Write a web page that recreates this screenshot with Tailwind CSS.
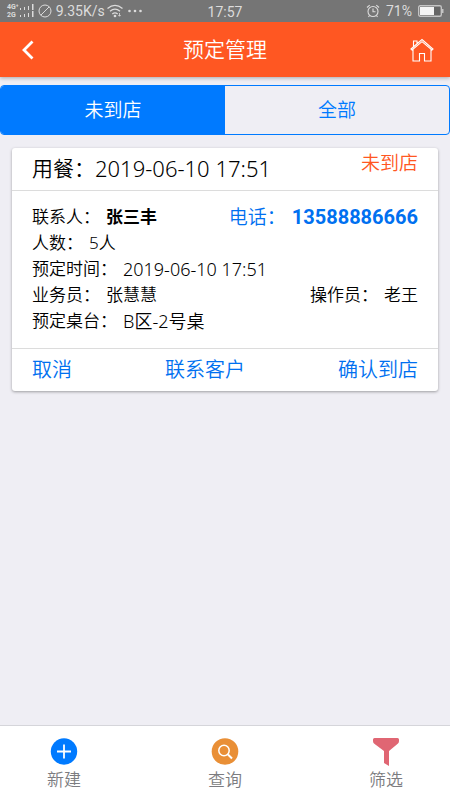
<!DOCTYPE html>
<html lang="zh-CN">
<head>
<meta charset="UTF-8">
<meta name="viewport" content="width=device-width, initial-scale=1">
<title>预定管理</title>
<script src="https://cdn.jsdelivr.net/npm/@tailwindcss/browser@4"></script>
</head>
<body class="flex min-h-screen flex-col bg-[#efeef4] font-['Noto_Sans','Noto_Sans_CJK_SC',sans-serif] text-[17px] leading-[26px] font-[350] text-black">

<!-- Device status bar -->
<div class="relative flex h-[22px] shrink-0 items-center justify-between bg-[#757575] pr-[6px] pl-[7px] font-['Roboto',sans-serif] text-sm leading-5 font-normal text-[#dcdcdc]">
  <div class="flex items-center gap-1">
    <div class="flex items-center gap-px">
      <div class="flex flex-col text-[7px] leading-[8px] font-bold"><span>4G⁺</span><span>2G</span></div>
      <svg class="h-[14px] w-[14px]" viewBox="0 0 14 14" fill="currentColor" aria-hidden="true"><path d="M0 4h1v2H0zM4 3h1v3H4zM8 2h1v4H8zM12 0h1.500v6H12zM0 11h1v2H0zM4 10h1v3H4zM8 9h1v4H8zM12 7h1.500v6H12z"/></svg>
    </div>
    <svg class="h-[14px] w-[14px]" viewBox="0 0 14 14" fill="none" stroke="currentColor" aria-hidden="true"><circle cx="7" cy="7" r="6"/><path d="M2.8 11.2 11.2 2.8"/></svg>
    <div class="flex items-center gap-[2px]">
      <span>9.35K/s</span>
      <svg class="h-[14px] w-4" viewBox="0 0 16 14" fill="none" stroke="currentColor" stroke-width="1.3" aria-hidden="true"><path d="M.5 4.600q7.500-6.500 15 0M3 7.300q5-4.200 10 0M5.300 10q2.700-2.200 5.400 0"/><circle cx="8" cy="12" r=".7" fill="currentColor"/><path d="M12.500 9v3M11.300 11l1.200 1.300 1.200-1.300" stroke-width=".8"/></svg>
    </div>
    <svg class="h-1 w-4" viewBox="0 0 16 4" fill="currentColor" aria-hidden="true"><circle cx="2.500" cy="2" r="1.300"/><circle cx="8" cy="2" r="1.300"/><circle cx="13.500" cy="2" r="1.300"/></svg>
  </div>
  <span class="absolute inset-x-0 top-[2px] text-center">17:57</span>
  <div class="flex items-center gap-[6px]">
    <svg class="h-[14px] w-[14px]" viewBox="0 0 14 14" fill="none" stroke="currentColor" stroke-width="1.1" aria-hidden="true"><circle cx="7" cy="7.500" r="5"/><path d="M7 4.500v3.300h2.500M1 3.500 3.700 1.200M13 3.500 10.300 1.200M3.500 11.500 2.500 13M10.500 11.500l1 1.500"/></svg>
    <span>71%</span>
    <svg class="h-3 w-[26px]" viewBox="0 0 26 12" aria-hidden="true"><rect x=".7" y=".7" width="22.600" height="10.600" rx="1.500" fill="#666" stroke="#c4c4c4" stroke-width="1.400"/><path d="M2 2h14v8H2z" fill="#f4f4f4"/><path d="M24 4h1.500v4H24z" fill="#c4c4c4"/></svg>
  </div>
</div>

<header class="flex h-[55px] shrink-0 items-center justify-between bg-[#ff5722] px-[14px] text-white shadow-[0_1px_4px_rgba(0,0,0,0.3)]">
  <button type="button" aria-label="返回" class="flex h-11 w-7 items-center justify-center">
    <svg class="h-5 w-4" viewBox="0 0 16 20" fill="none" stroke="currentColor" stroke-width="2.800" aria-hidden="true"><path d="M12.500 1.500 4 10l8.500 8.500"/></svg>
  </button>
  <h1 class="pb-[2px] text-[21px] leading-7 font-[350]">预定管理</h1>
  <a href="#" aria-label="首页" class="flex h-11 w-7 items-center justify-center">
    <svg class="h-6 w-6" viewBox="0 0 24 24" fill="none" stroke="currentColor" stroke-width="1.100" aria-hidden="true"><path d="M1 11 12 1.500 23 11l-1 1L12 3.700 2 12zM3 11.500V23h6.500v-7.500h5V23H21V11.500M3.500 8.500V3H7v2.800"/></svg>
  </a>
</header>

<main class="flex-1">
  <div class="mt-2 grid h-[50px] grid-cols-2 overflow-hidden rounded border border-[#007aff] text-[19px]">
    <button type="button" aria-pressed="true" class="bg-[#007aff] text-white">未到店</button>
    <button type="button" aria-pressed="false" class="text-[#007aff]">全部</button>
  </div>

  <article class="mx-3 mt-[13px] rounded-[3px] bg-white shadow-[0_1px_3px_rgba(0,0,0,0.35)]">
    <div class="flex h-[43px] items-start justify-between border-b border-[#dcdcdc] px-5">
      <h2 class="flex pt-[7px] text-[21px] font-[350]"><span>用餐：</span><span class="text-[22px] leading-[26px]">2019-06-10 17:51</span></h2>
      <span class="pt-[2px] text-[19px] text-[#ff5722]">未到店</span>
    </div>
    <div class="px-5 pt-[13px] pb-[14px]">
      <div class="flex h-[26px] justify-between">
        <p class="flex gap-[6px]"><span>联系人：</span><strong class="font-bold">张三丰</strong></p>
        <a href="tel:13588886666" class="flex gap-[6px] text-[19px] text-[#0070f0]"><span>电话：</span><strong class="font-['Roboto',sans-serif] text-xl leading-[26px] font-bold">13588886666</strong></a>
      </div>
      <p class="flex gap-[6px]"><span>人数：</span><span>5人</span></p>
      <p class="flex gap-[6px]"><span>预定时间：</span><span class="text-lg leading-[26px]">2019-06-10 17:51</span></p>
      <div class="flex justify-between">
        <p class="flex gap-[6px]"><span>业务员：</span><span>张慧慧</span></p>
        <p class="flex gap-[6px]"><span>操作员：</span><span>老王</span></p>
      </div>
      <p class="flex gap-[6px]"><span>预定桌台：</span><span class="text-lg leading-[26px]">B区-2号桌</span></p>
    </div>
    <div class="flex h-[43px] items-center justify-between border-t border-[#dcdcdc] px-5 text-xl text-[#0070f0]">
      <button type="button">取消</button>
      <button type="button">联系客户</button>
      <button type="button">确认到店</button>
    </div>
  </article>
</main>

<nav class="grid h-[75px] shrink-0 grid-cols-[128px_1fr_128px] border-t border-[#d5d5da] bg-white text-[#7c7c80]">
  <button type="button" class="flex flex-col items-center pt-3">
    <svg class="h-7 w-7" viewBox="0 0 28 28" aria-hidden="true"><circle cx="14" cy="13.500" r="13.200" fill="#007aff"/><path d="M14 6.500v14M7 13.500h14" stroke="#fff" stroke-width="1.800"/></svg>
    <span class="pt-px">新建</span>
  </button>
  <button type="button" class="flex flex-col items-center pt-3">
    <svg class="h-7 w-7" viewBox="0 0 28 28" fill="none" aria-hidden="true"><circle cx="14" cy="13.500" r="13.300" fill="#e98f36"/><circle cx="13" cy="12.500" r="5.200" stroke="#fff" stroke-width="1.500"/><path d="m17 16.500 4 4" stroke="#fff" stroke-width="2"/></svg>
    <span class="pt-px">查询</span>
  </button>
  <button type="button" class="flex flex-col items-center pt-3">
    <svg class="h-7 w-7" viewBox="0 0 28 28" fill="#e06673" aria-hidden="true"><path d="M2.500 0h23q1.500 0 1.500 1.500V3q0 1.500-1 2.500L17 13v15l-5-3V13L2 5.500Q1 4.500 1 3V1.500Q1 0 2.500 0z"/></svg>
    <span class="pt-px">筛选</span>
  </button>
</nav>
</body>
</html>
